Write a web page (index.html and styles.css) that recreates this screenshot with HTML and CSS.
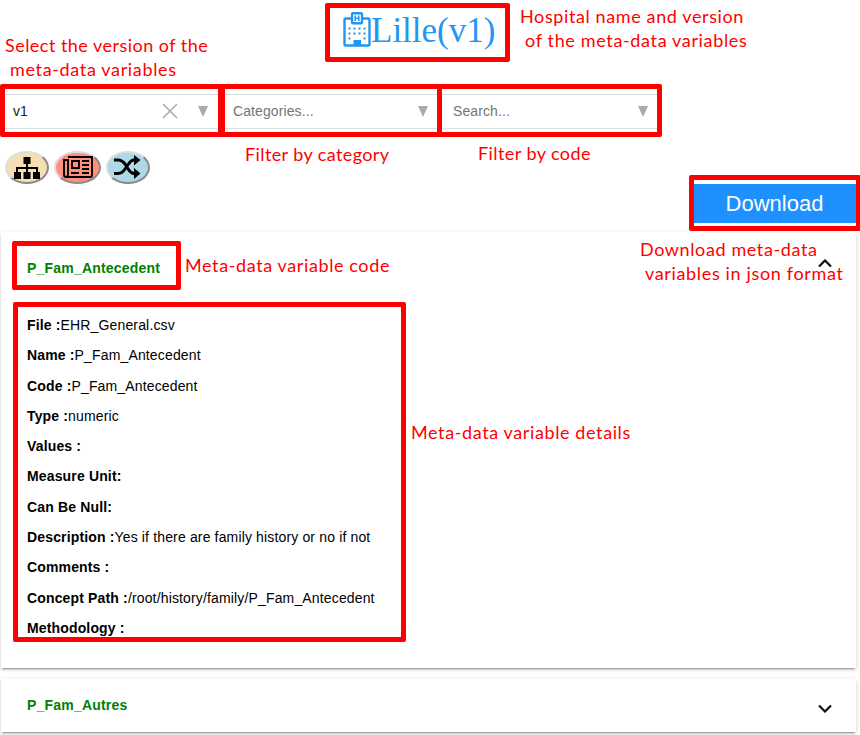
FILE: index.html
```html
<!DOCTYPE html>
<html lang="en">
<head>
<meta charset="utf-8">
<title>Lille(v1)</title>
<link rel="stylesheet" href="styles.css">
</head>
<body>
<header class="title">
  <svg class="hospital" width="28" height="36" viewBox="0 0 28 36" fill="none" stroke="#2196f3" stroke-width="2.400">
    <path d="M9 6.500H3Q1.500 6.500 1.500 8V32Q1.500 33.500 3 33.500H25Q26.500 33.500 26.500 32V8Q26.500 6.500 25 6.500H19"/>
    <rect x="9" y="1.200" width="10" height="10" rx="1"/>
    <path d="M12.200 3.500V9M15.800 3.500V9M12 6.200H16" stroke-width="1.500"/>
    <path d="M5.500 16.500H24M5.500 21.500H24M5.500 26.500H9M20.500 26.500H24" stroke-width="2" stroke-dasharray="2 3"/>
    <path d="M10.500 28H18V34H10.500Z" fill="#2196f3" stroke="none"/>
  </svg>
  <h1>Lille(v1)</h1>
</header>
<div class="filters">
  <div class="select"><span class="value">v1</span>
    <svg class="clear" width="16" height="16" viewBox="0 0 16 16"><path d="M1 1L15 15M15 1L1 15" stroke="#aaa" stroke-width="1.500"/></svg>
    <i class="arrow"></i></div>
  <div class="select"><span>Categories...</span><i class="arrow"></i></div>
  <div class="select"><span>Search...</span><i class="arrow"></i></div>
</div>
<div class="tools">
  <button class="tool tree"><svg width="28" height="24" viewBox="0 0 28 24"><path d="M10.500 1H17.500V8H15V11H25V16H27V23H20V16H23V13H15V16H17.500V23H10.500V16H13V13H5V16H8V23H1V16H3V11H13V8H10.500Z"/></svg></button>
  <button class="tool news"><svg width="30" height="22" viewBox="0 0 30 22" fill="none" stroke="#000" stroke-width="1.900"><path d="M5 1H29V19Q29 21 27 21H3Q1 21 1 19V4H5V18Q5 21 3 21"/><path d="M9 5H16V12H9ZM19 5H26M19 9H26M19 13H26M8 17H16M19 17H26"/></svg></button>
  <button class="tool shuffle"><svg width="28" height="24" viewBox="0 0 28 24"><path d="M1 5H5Q9 5 12 9L15.500 14.500Q18 18.500 21 18.500H23M1 18.500H5Q9 18.500 12 14L15.500 9Q18 5 21 5H23" fill="none" stroke="#000" stroke-width="3"/><path d="M21 0L27.500 5L21 10.500ZM21 13L27.500 18.500L21 24Z"/></svg></button>
</div>
<div class="actions"><button class="download">Download</button></div>
<main>
  <section class="card open">
    <div class="head"><h2>P_Fam_Antecedent</h2><svg width="14" height="9" viewBox="0 0 14 9"><path d="M1 7.500L7 1.500L13 7.500" fill="none" stroke="#111" stroke-width="2.200"/></svg></div>
    <div class="details">
      <p><b>File :</b>EHR_General.csv</p>
      <p><b>Name :</b>P_Fam_Antecedent</p>
      <p><b>Code :</b>P_Fam_Antecedent</p>
      <p><b>Type :</b>numeric</p>
      <p><b>Values :</b></p>
      <p><b>Measure Unit:</b></p>
      <p><b>Can Be Null:</b></p>
      <p><b>Description :</b>Yes if there are family history or no if not</p>
      <p><b>Comments :</b></p>
      <p><b>Concept Path :</b>/root/history/family/P_Fam_Antecedent</p>
      <p><b>Methodology :</b></p>
    </div>
  </section>
  <section class="card">
    <div class="head"><h2>P_Fam_Autres</h2><svg width="14" height="9" viewBox="0 0 14 9"><path d="M1 1.500L7 7.500L13 1.500" fill="none" stroke="#111" stroke-width="2.200"/></svg></div>
  </section>
</main>

<div class="mark mark-title"></div>
<div class="mark mark-version"></div>
<div class="mark mark-category"></div>
<div class="mark mark-search"></div>
<div class="mark mark-download"></div>
<div class="mark mark-code"></div>
<div class="mark mark-details"></div>
<div class="note note-version">Select the version of the<br><span>meta-data variables</span></div>
<div class="note note-title">Hospital name and version<br><span>of the meta-data variables</span></div>
<div class="note note-category">Filter by category</div>
<div class="note note-search">Filter by code</div>
<div class="note note-download">Download meta-data<br><span>variables in json format</span></div>
<div class="note note-code">Meta-data variable code</div>
<div class="note note-details">Meta-data variable details</div>
</body>
</html>
```
FILE: styles.css
```css
* { box-sizing: border-box; }
body {
  margin: 0;
  position: relative;
  height: 735px;
  overflow: hidden;
  background: #fff;
  color: #000;
  font-family: "Liberation Sans", Arial, sans-serif;
  font-size: 14px;
}
.title {
  display: flex;
  height: 94px;
  padding: 12px 0 0 343px;
  color: #2196f3;
}
.title h1 {
  margin: 0;
  font: 400 35px/38px "Liberation Serif", "Times New Roman", serif;
}
.filters { display: flex; height: 35px; padding-left: 1px; }
.select {
  display: flex;
  align-items: center;
  width: 220px;
  padding: 0 12px 0 12px;
  border: 1px solid #ddd;
  border-left: 0;
  color: #757575;
}
.select span { flex: 1; padding-bottom: 2px; letter-spacing: .1px; }
.select .value { color: #222; }
.clear { margin: -2px 20px 0 0; }
.arrow {
  border: 5.5px solid transparent;
  border-top: 11px solid #aaa;
  border-bottom: 0;
}
.tools { display: flex; gap: 6px; height: 55px; padding: 22px 0 0 5px; }
.tool {
  display: flex;
  align-items: center;
  justify-content: center;
  width: 44px;
  height: 33px;
  padding: 0;
  border: 2px solid;
  border-color: #ddd #8a8a8a #8a8a8a #ddd;
  border-radius: 50%;
}
.tool svg { flex: none; }
.tree { background: wheat; }
.news { width: 47px; margin-left: -1px; background: #ff917c; }
.news svg { margin: -2px 0 0 1px; }
.shuffle { margin-left: -1px; background: lightblue; }
.shuffle svg { margin: -2px 2px 0 0; }
.actions { display: flex; justify-content: flex-end; padding-right: 4px; }
.download {
  width: 163px;
  height: 39px;
  padding: 0;
  border: 0;
  background: #1e90ff;
  color: #fff;
  font: 22px "Liberation Sans", Arial, sans-serif;
}
main { padding: 9px 4px 0 1px; }
.card {
  height: 53px;
  margin-bottom: 11px;
  padding: 0 24px 0 26px;
  background: #fff;
  box-shadow: 0 3px 1px -2px rgba(0,0,0,.2), 0 2px 2px rgba(0,0,0,.14), 0 1px 5px rgba(0,0,0,.12);
}
.card.open { height: 436px; }
.head { display: flex; align-items: center; justify-content: space-between; height: 51px; }
.head svg { margin-top: 7px; }
.open .head { height: 64px; padding-top: 8px; }
.open .head svg { margin-top: -9px; }
h2 { margin: 0; color: green; font-size: 14px; letter-spacing: .2px; }
.details { padding-top: 14px; letter-spacing: .15px; }
.details p { margin: 0; height: 30.3px; line-height: 30px; }
.mark { position: absolute; border: 5px solid red; border-radius: 2px; }
.mark-title { left: 325px; top: 3px; width: 185px; height: 59px; }
.mark-version { left: 0; top: 84px; width: 223px; height: 53px; }
.mark-category { left: 220px; top: 84px; width: 222px; height: 53px; }
.mark-search { left: 437px; top: 84px; width: 225px; height: 53px; }
.mark-download { left: 689px; top: 175px; width: 172px; height: 56px; }
.mark-code { left: 12px; top: 241px; width: 169px; height: 49px; }
.mark-details { left: 13px; top: 302px; width: 393px; height: 340px; }
.note {
  position: absolute;
  color: red;
  font: 400 18px/24px Lato, sans-serif;
  letter-spacing: .61px;
  white-space: nowrap;
}
.note span { margin-left: 5px; letter-spacing: .65px; }
.note-version { left: 5px; top: 33px; letter-spacing: .47px; }
.note-title { left: 520px; top: 4px; }
.note-category { left: 245px; top: 142px; letter-spacing: .4px; }
.note-search { left: 478px; top: 141px; letter-spacing: .43px; }
.note-download { left: 640px; top: 237px; }
.note-code { left: 185px; top: 253px; }
.note-details { left: 411px; top: 420px; }
```
